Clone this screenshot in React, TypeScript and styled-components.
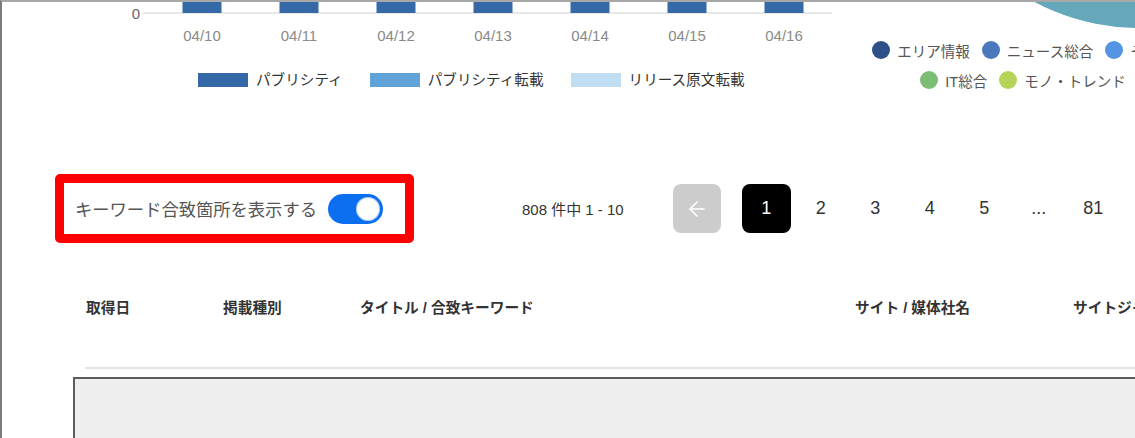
import React, { useState } from "react";
import styled, { createGlobalStyle } from "styled-components";
import { ArrowLeft } from "lucide-react";

const GlobalStyle = createGlobalStyle`
  html, body {
    margin: 0;
    padding: 0;
    background: #ffffff;
    overflow: hidden;
  }
  body {
    font-family: "Liberation Sans", "Noto Sans CJK JP", sans-serif;
    color: #333333;
  }
  * { box-sizing: border-box; }
`;

const Page = styled.div`
  width: 1135px;
  height: 438px;
  overflow: hidden;
  background: #ffffff;
  border-top: 2px solid #a8a8a8;
  border-left: 2px solid #7b7b7b;
`;

/* ---------- charts ---------- */

const ChartSection = styled.section`
  display: flex;
  height: 88px;
`;

const BarPanel = styled.div`
  width: 833px;
  flex-shrink: 0;
`;

const BarSvg = styled.svg`
  display: block;
`;

const BarLegend = styled.ul`
  display: flex;
  align-items: center;
  gap: 27px;
  list-style: none;
  margin: 20px 0 0;
  padding: 0 0 0 196px;
`;

const BarLegendItem = styled.li`
  display: flex;
  align-items: center;
  gap: 8px;
  font-size: 14.6px;
  line-height: 16px;
  color: #333333;
  white-space: nowrap;
`;

const Swatch = styled.span<{ $color: string }>`
  width: 50px;
  height: 14px;
  background: ${(p) => p.$color};
`;

const PiePanel = styled.div`
  width: 376px;
  flex-shrink: 0;
`;

const PieSvg = styled.svg`
  display: block;
`;

const PieLegend = styled.div`
  display: flex;
  flex-direction: column;
  gap: 10px;
  margin-top: 8px;
`;

const PieLegendRow = styled.ul`
  display: flex;
  justify-content: center;
  gap: 12px;
  list-style: none;
  margin: 0;
  padding: 0;
`;

const PieLegendItem = styled.li`
  display: flex;
  align-items: center;
  gap: 7px;
  height: 20px;
  font-size: 14.5px;
  color: #555555;
  white-space: nowrap;
`;

const Dot = styled.span<{ $color: string }>`
  width: 18px;
  height: 18px;
  border-radius: 50%;
  background: ${(p) => p.$color};
`;

/* ---------- toolbar ---------- */

const Toolbar = styled.div`
  display: flex;
  align-items: center;
  margin-top: 84px;
  padding-left: 53px;
`;

const HighlightBox = styled.div`
  display: flex;
  align-items: center;
  gap: 11px;
  height: 69px;
  padding: 0 22px 0 11px;
  border: 9px solid #ff0000;
  border-radius: 5px;
`;

const ToggleLabel = styled.span`
  font-size: 17.3px;
  color: #555555;
  white-space: nowrap;
`;

const Switch = styled.button<{ $on: boolean }>`
  position: relative;
  width: 55px;
  height: 30px;
  padding: 0;
  border: none;
  border-radius: 15px;
  background: ${(p) => (p.$on ? "#0b6ff0" : "#c4c4c4")};
  cursor: pointer;

  &::after {
    content: "";
    position: absolute;
    top: 3px;
    left: ${(p) => (p.$on ? "28px" : "3px")};
    width: 24px;
    height: 24px;
    border-radius: 50%;
    background: #ffffff;
    box-shadow: inset 0 0 0 1px rgba(11, 111, 240, 0.35);
  }
`;

const Count = styled.span`
  margin-left: 108px;
  font-size: 15px;
  color: #333333;
  white-space: nowrap;
`;

const Pagination = styled.nav`
  display: flex;
  align-items: center;
  gap: 5.5px;
  margin-left: 49px;
`;

const PageButton = styled.button<{ $active?: boolean }>`
  width: 49px;
  height: 49px;
  padding: 0;
  border: none;
  border-radius: 8px;
  background: ${(p) => (p.$active ? "#000000" : "transparent")};
  color: ${(p) => (p.$active ? "#ffffff" : "#333333")};
  font-family: "Liberation Sans", sans-serif;
  font-size: 18px;
  cursor: pointer;
`;

const PrevButton = styled.button`
  display: flex;
  align-items: center;
  justify-content: center;
  width: 48px;
  height: 49px;
  margin-right: 15.5px;
  padding: 0;
  border: none;
  border-radius: 8px;
  background: #cccccc;
  color: #ffffff;
`;

/* ---------- table ---------- */

const TableHeader = styled.div`
  display: grid;
  grid-template-columns: 137px 137px 495px 218px auto;
  align-items: center;
  height: 20px;
  margin-top: 53px;
  padding-left: 84px;
`;

const HeaderCell = styled.span`
  font-size: 14.7px;
  font-weight: 700;
  color: #333333;
  white-space: nowrap;
`;

const Divider = styled.hr`
  height: 2px;
  margin: 51px 0 0 83px;
  border: none;
  background: #e4e4e4;
`;

const ResultBox = styled.div`
  height: 100px;
  margin: 8px 0 0 71px;
  background: #eeeeee;
  border-top: 2px solid #5c5c5c;
  border-left: 2px solid #5c5c5c;
`;

/* ---------- data ---------- */

const dates = ["04/10", "04/11", "04/12", "04/13", "04/14", "04/15", "04/16"];

const barSeries = [
  { label: "パブリシティ", color: "#3468a7" },
  { label: "パブリシティ転載", color: "#5fa3d9" },
  { label: "リリース原文転載", color: "#c0ddf2" },
];

const pieRows = [
  [
    { label: "エリア情報", color: "#2e5088" },
    { label: "ニュース総合", color: "#4a78bd" },
    { label: "その他", color: "#5594e2" },
  ],
  [
    { label: "IT総合", color: "#7cbd76" },
    { label: "モノ・トレンド", color: "#b4d357" },
  ],
];

const columns = ["取得日", "掲載種別", "タイトル / 合致キーワード", "サイト / 媒体社名", "サイトジャンル"];

const pages = ["2", "3", "4", "5", "...", "81"];

function BarChart() {
  const axisY = 11;
  return (
    <BarSvg width={833} height={50}>
      <text x={138} y={axisY + 5.5} textAnchor="end" fontSize={15} fill="#666666" fontFamily="Liberation Sans, sans-serif">
        0
      </text>
      <line x1={141} x2={151} y1={axisY} y2={axisY} stroke="#cccccc" strokeWidth={1} />
      <line x1={151} x2={830} y1={axisY} y2={axisY} stroke="#e0e0e0" strokeWidth={1.5} />
      {dates.map((d, i) => {
        const cx = 200 + i * 97;
        return (
          <g key={d}>
            <rect x={cx - 19.5} y={-2} width={39} height={axisY + 2} fill="#3468a7" />
            <text
              x={cx}
              y={38.5}
              textAnchor="middle"
              fontSize={15}
              fill="#8a8a8a"
              fontFamily="Liberation Sans, sans-serif"
            >
              {d}
            </text>
          </g>
        );
      })}
    </BarSvg>
  );
}

export default function App() {
  const [highlight, setHighlight] = useState(true);

  return (
    <>
      <GlobalStyle />
      <Page>
        <ChartSection>
          <BarPanel>
            <BarChart />
            <BarLegend>
              {barSeries.map((s) => (
                <BarLegendItem key={s.label}>
                  <Swatch $color={s.color} />
                  {s.label}
                </BarLegendItem>
              ))}
            </BarLegend>
          </BarPanel>
          <PiePanel>
            <PieSvg width={376} height={30}>
              <circle cx={304} cy={-197} r={223} fill="#66a8bb" />
            </PieSvg>
            <PieLegend>
              {pieRows.map((row, i) => (
                <PieLegendRow key={i}>
                  {row.map((item) => (
                    <PieLegendItem key={item.label}>
                      <Dot $color={item.color} />
                      {item.label}
                    </PieLegendItem>
                  ))}
                </PieLegendRow>
              ))}
            </PieLegend>
          </PiePanel>
        </ChartSection>

        <Toolbar>
          <HighlightBox>
            <ToggleLabel>キーワード合致箇所を表示する</ToggleLabel>
            <Switch
              $on={highlight}
              aria-pressed={highlight}
              onClick={() => setHighlight((v) => !v)}
            />
          </HighlightBox>
          <Count>808 件中 1 - 10</Count>
          <Pagination>
            <PrevButton aria-label="前へ">
              <ArrowLeft size={24} strokeWidth={1.6} />
            </PrevButton>
            <PageButton $active>1</PageButton>
            {pages.map((p) => (
              <PageButton key={p}>{p}</PageButton>
            ))}
          </Pagination>
        </Toolbar>

        <TableHeader>
          {columns.map((c) => (
            <HeaderCell key={c}>{c}</HeaderCell>
          ))}
        </TableHeader>
        <Divider />
        <ResultBox />
      </Page>
    </>
  );
}
